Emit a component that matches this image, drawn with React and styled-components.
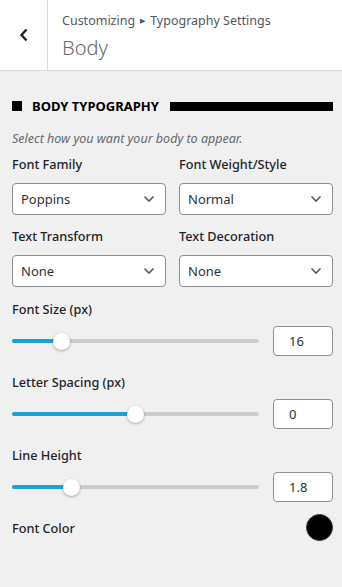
import React from "react";
import styled, { createGlobalStyle } from "styled-components";

const Global = createGlobalStyle`
  html, body { margin: 0; padding: 0; background: #f0f0f1; }
  body { font-family: "Noto Sans", "Open Sans", sans-serif; color: #1d2327; }
  * { box-sizing: border-box; }
`;

const Page = styled.div`
  width: 342px;
  min-height: 587px;
  background: #f0f0f1;
`;

const Header = styled.header`
  display: flex;
  height: 71px;
  background: #fff;
  border-bottom: 1px solid #dcdcde;
`;

const BackButton = styled.button`
  width: 48px;
  flex: none;
  border: 0;
  border-right: 1px solid #dcdcde;
  background: #fff;
  display: flex;
  align-items: center;
  justify-content: center;
  padding: 0;
`;

const Titles = styled.div`
  display: flex;
  flex-direction: column;
  padding: 11px 0 0 14px;
`;

const Crumb = styled.div`
  font-size: 12.5px;
  line-height: 20px;
  color: #50575e;
  display: flex;
  align-items: center;
  gap: 5px;
`;

const Arrow = styled.span`
  font-size: 7px;
  color: #50575e;
`;

const Title = styled.h1`
  margin: 3px 0 0;
  font-size: 20px;
  font-weight: 300;
  line-height: 28px;
  color: #646970;
`;

const Body = styled.main`
  padding: 27px 9px 0 12px;
`;

const SectionHead = styled.div`
  display: flex;
  align-items: center;
  height: 16px;
`;

const Square = styled.span`
  width: 10px;
  height: 10px;
  background: #000;
  flex: none;
`;

const SectionTitle = styled.h2`
  margin: 0 11px 0 10px;
  font-size: 13px;
  font-weight: 700;
  color: #000;
  white-space: nowrap;
`;

const Bar = styled.span`
  flex: 1;
  height: 9px;
  background: #000;
`;

const Desc = styled.p`
  margin: 16px 0 0;
  font-size: 12.5px;
  font-style: italic;
  color: #646970;
  line-height: 18px;
`;

const Grid = styled.div`
  display: grid;
  grid-template-columns: 154px 154px;
  column-gap: 13px;
  row-gap: 12px;
  margin-top: 7px;
`;

const Field = styled.div`
  display: flex;
  flex-direction: column;
`;

const Label = styled.label`
  font-size: 12.7px;
  font-weight: 500;
  line-height: 18px;
  color: #1d2327;
  margin-bottom: ${(p) => p.$gap ?? 10}px;
`;

const SelectBox = styled.div`
  height: 32px;
  border: 1px solid #8c8f94;
  border-radius: 4px;
  background: #fff;
  display: flex;
  align-items: center;
  justify-content: space-between;
  padding: 0 10px 0 8px;
  font-size: 13px;
  color: #2c3338;
`;

const SliderRow = styled.div`
  display: flex;
  align-items: center;
  gap: 14px;
  margin-bottom: 17px;
`;

const Track = styled.div`
  position: relative;
  flex: 1;
  height: 4px;
  border-radius: 2px;
  background: #cccccc;
`;

const Fill = styled.div`
  height: 4px;
  border-radius: 2px 0 0 2px;
  background: #17a2db;
`;

const Thumb = styled.span`
  position: absolute;
  top: 50%;
  width: 17px;
  height: 17px;
  margin: -8.5px 0 0 -8.5px;
  border-radius: 50%;
  background: #fff;
  box-shadow: 0 1px 3px rgba(0, 0, 0, 0.3);
`;

const NumBox = styled.div`
  width: 60px;
  height: 30px;
  flex: none;
  border: 1px solid #8c8f94;
  border-radius: 4px;
  background: #fff;
  display: flex;
  align-items: center;
  padding-left: 15px;
  font-size: 13px;
  color: #2c3338;
`;

const SliderBlock = styled.div`
  display: flex;
  flex-direction: column;
  margin-top: ${(p) => p.$top || 0}px;
`;

const ColorRow = styled.div`
  display: flex;
  align-items: center;
  justify-content: space-between;
  margin-top: -5px;
`;

const Swatch = styled.span`
  width: 27px;
  height: 27px;
  border-radius: 50%;
  background: #000;
  border: 1px solid #333;
`;

const Chevron = () => (
  <svg width="12" height="8" viewBox="0 0 12 8">
    <path d="M1.5 1.5 L6 6 L10.5 1.5" fill="none" stroke="#50575e" strokeWidth="1.6" />
  </svg>
);

const Select = ({ value }) => (
  <SelectBox>
    <span>{value}</span>
    <Chevron />
  </SelectBox>
);

const Slider = ({ label, pct, value, top }) => (
  <SliderBlock $top={top}>
    <Label $gap={8}>{label}</Label>
    <SliderRow>
      <Track>
        <Fill style={{ width: `${pct}%` }} />
        <Thumb style={{ left: `${pct}%` }} />
      </Track>
      <NumBox>{value}</NumBox>
    </SliderRow>
  </SliderBlock>
);

export default function App() {
  return (
    <Page>
      <Global />
      <Header>
        <BackButton aria-label="Back">
          <svg width="10" height="14" viewBox="0 0 10 14">
            <path d="M7.5 1.5 L2.5 7 L7.5 12.5" fill="none" stroke="#1d2327" strokeWidth="2.4" />
          </svg>
        </BackButton>
        <Titles>
          <Crumb>
            Customizing <Arrow>▶</Arrow> Typography Settings
          </Crumb>
          <Title>Body</Title>
        </Titles>
      </Header>
      <Body>
        <SectionHead>
          <Square />
          <SectionTitle>BODY TYPOGRAPHY</SectionTitle>
          <Bar />
        </SectionHead>
        <Desc>Select how you want your body to appear.</Desc>
        <Grid>
          <Field>
            <Label>Font Family</Label>
            <Select value="Poppins" />
          </Field>
          <Field>
            <Label>Font Weight/Style</Label>
            <Select value="Normal" />
          </Field>
          <Field>
            <Label>Text Transform</Label>
            <Select value="None" />
          </Field>
          <Field>
            <Label>Text Decoration</Label>
            <Select value="None" />
          </Field>
        </Grid>
        <Slider label="Font Size (px)" pct={20} value="16" top={13} />
        <Slider label="Letter Spacing (px)" pct={50} value="0" />
        <Slider label="Line Height" pct={24} value="1.8" />
        <ColorRow>
          <Label $gap={0}>Font Color</Label>
          <Swatch />
        </ColorRow>
      </Body>
    </Page>
  );
}
